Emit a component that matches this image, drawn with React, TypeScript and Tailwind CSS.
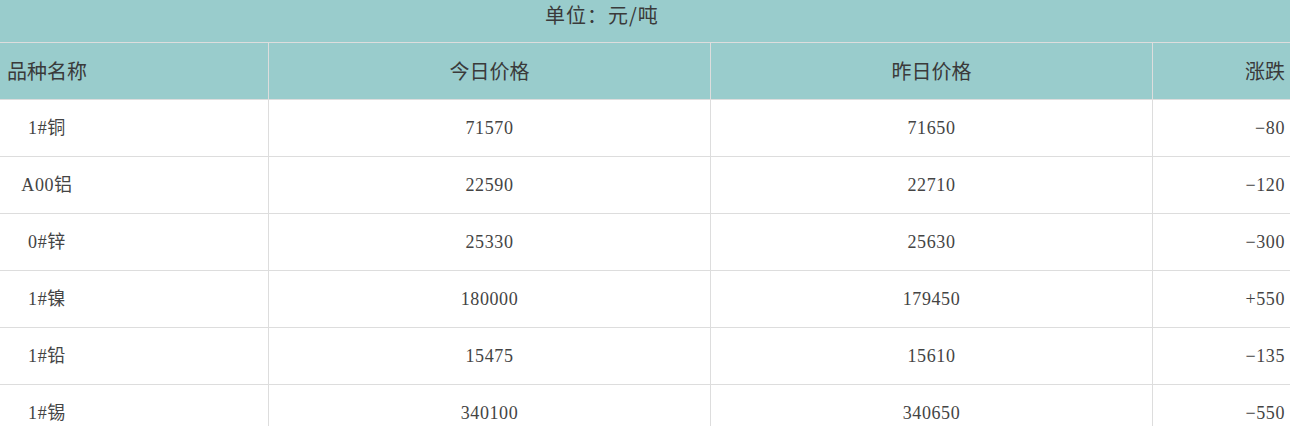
const rows = [
  { name: "1#铜", today: "71570", yesterday: "71650", change: "−80" },
  { name: "A00铝", today: "22590", yesterday: "22710", change: "−120" },
  { name: "0#锌", today: "25330", yesterday: "25630", change: "−300" },
  { name: "1#镍", today: "180000", yesterday: "179450", change: "+550" },
  { name: "1#铅", today: "15475", yesterday: "15610", change: "−135" },
  { name: "1#锡", today: "340100", yesterday: "340650", change: "−550" },
];

const cjk = "font-['Noto_Sans_CJK_SC',sans-serif]";
const body = "font-['Liberation_Serif','Noto_Sans_CJK_SC',serif]";

export default function App() {
  return (
    <div className="w-[1290px] h-[426px] overflow-hidden bg-white text-[#444]">
      <div className={`h-[42px] bg-[#99cccc] pl-[545px] pt-[3px] text-[20px] leading-[24px] tracking-[1px] text-[#3a3a3a] ${cjk}`}>
        单位：元/吨
      </div>

      <div className={`flex h-[58px] bg-[#99cccc] border-y border-[#dddddd] text-[20px] text-[#3a3a3a] ${cjk}`}>
        <div className="w-[269px] border-r border-[#dddddd] flex items-center pl-[7px]">品种名称</div>
        <div className="w-[442px] border-r border-[#dddddd] flex items-center justify-center">今日价格</div>
        <div className="w-[442px] border-r border-[#dddddd] flex items-center justify-center">昨日价格</div>
        <div className="flex-1 flex items-center justify-end pr-[5px]">涨跌</div>
      </div>

      {rows.map((r) => (
        <div key={r.name} className={`flex h-[57px] border-b border-[#dddddd] text-[18px] tracking-[0.6px] ${body}`}>
          <div className="w-[269px] border-r border-[#dddddd] flex items-center">
            <span className="w-[94px] text-center">{r.name}</span>
          </div>
          <div className="w-[442px] border-r border-[#dddddd] flex items-center justify-center">{r.today}</div>
          <div className="w-[442px] border-r border-[#dddddd] flex items-center justify-center">{r.yesterday}</div>
          <div className="flex-1 flex items-center justify-end pr-[5px]">{r.change}</div>
        </div>
      ))}
    </div>
  );
}
